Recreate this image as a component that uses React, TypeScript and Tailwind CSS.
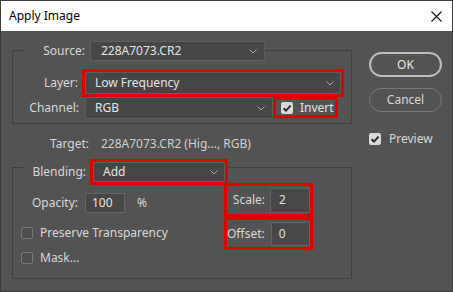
import React from "react";

const FONT = { fontFamily: '"Noto Sans", "Open Sans", sans-serif' };

const Chevron = () => (
  <svg width="8" height="5" viewBox="0 0 8 5" className="shrink-0">
    <path d="M0.5 0.5 L4 4 L7.5 0.5" fill="none" stroke="#a9a9a9" strokeWidth="1" />
  </svg>
);

const Check = ({ checked }: { checked?: boolean }) =>
  checked ? (
    <div className="w-[12px] h-[12px] rounded-[2px] bg-[#d9d9d9] flex items-center justify-center shrink-0">
      <svg width="12" height="12" viewBox="0 0 12 12">
        <path d="M2.6 6.2 L5 8.6 L9.6 3.6" fill="none" stroke="#2b2b2b" strokeWidth="2" />
      </svg>
    </div>
  ) : (
    <div className="w-[12px] h-[12px] rounded-[2px] border border-[#777777] bg-[#4e4e4e] shrink-0" />
  );

const Combo = ({ value, className }: { value: string; className?: string }) => (
  <div
    className={`flex items-center justify-between bg-[#464646] border border-[#5d5d5d] rounded-[2px] pl-[9px] pr-[6px] text-[#e4e4e4] ${className ?? ""}`}
  >
    <span>{value}</span>
    <Chevron />
  </div>
);

const Field = ({ value, className }: { value: string; className?: string }) => (
  <div
    className={`flex items-center bg-[#474747] border border-[#636363] pl-[6px] text-[#e4e4e4] ${className ?? ""}`}
  >
    {value}
  </div>
);

export default function App() {
  return (
    <div
      className="w-[453px] h-[292px] border border-[#3c3c3c] bg-[#535353] flex flex-col text-[12px] leading-none text-[#d8d8d8] overflow-hidden"
      style={FONT}
    >
      {/* title bar */}
      <div className="h-[30px] bg-white flex items-center justify-between pl-[8px] pr-[10px] shrink-0">
        <span className="text-[12px] text-black">Apply Image</span>
        <svg width="11" height="11" viewBox="0 0 11 11">
          <path d="M0.5 0.5 L10.5 10.5 M10.5 0.5 L0.5 10.5" stroke="#111" strokeWidth="1.1" />
        </svg>
      </div>

      <div className="flex flex-1">
        {/* left column */}
        <div className="w-[351px] ml-[11px] flex flex-col">
          {/* source frame */}
          <div className="mt-[19px] w-[340px] h-[74px] border border-[#3f3f3f] flex flex-col">
            <div className="flex items-stretch h-[20px] -mt-[10px]">
              <div className="ml-[12px] w-[65px] bg-[#535353] flex items-center justify-end pr-[5px]">
                Source:
              </div>
              <Combo value="228A7073.CR2" className="w-[175px] h-[20px] pl-[10px] pr-[7px]" />
            </div>
            <div className="flex items-center mt-[8px]">
              <div className="w-[69px] text-right pr-[4px]">Layer:</div>
              <div className="w-[262px] h-[28px] border-[3px] border-[#e00000] flex">
                <Combo value="Low Frequency" className="flex-1 pr-[4px]" />
              </div>
            </div>
            <div className="flex items-start">
              <div className="w-[72px] h-[22px] flex items-center justify-end pr-[6px]">Channel:</div>
              <Combo value="RGB" className="w-[188px] h-[22px] pr-[7px]" />
              <div className="w-[65px] h-[21px] border-[3px] border-[#e00000] flex items-center pl-[5px] gap-[7px] text-[#e4e4e4]">
                <Check checked />
                <span>Invert</span>
              </div>
            </div>
          </div>

          {/* target */}
          <div className="flex items-center h-[20px] mt-[10px]">
            <div className="w-[89px] text-right pr-[12px]">Target:</div>
            <span className="text-[#d0d0d0]">228A7073.CR2 (Hig..., RGB)</span>
          </div>

          {/* blending frame */}
          <div className="mt-[13px] w-[340px] h-[112px] border border-[#3f3f3f] flex flex-col">
            <div className="flex items-stretch h-[26px] -mt-[9px]">
              <div className="ml-[12px] w-[65px] bg-[#535353] flex items-center justify-end pr-[4px]">
                Blending:
              </div>
              <div className="w-[138px] border-[3px] border-[#e00000] flex">
                <Combo value="Add" className="flex-1 pr-[5px]" />
              </div>
            </div>
            <div className="flex -mt-[2px]">
              <div className="w-[211px] flex flex-col pt-[10px]">
                <div className="flex items-center h-[20px]">
                  <div className="w-[72px] text-right pr-[7px]">Opacity:</div>
                  <Field value="100" className="w-[40px] h-[20px]" />
                  <span className="ml-[12px]">%</span>
                </div>
                <div className="flex items-center h-[20px] mt-[10px] pl-[8px] gap-[7px]">
                  <Check />
                  <span>Preserve Transparency</span>
                </div>
                <div className="flex items-center h-[20px] mt-[5px] pl-[8px] gap-[7px]">
                  <Check />
                  <span>Mask...</span>
                </div>
              </div>
              <div className="flex flex-col w-[89px]">
                <div className="h-[34px] border-[3px] border-[#e00000] flex items-center justify-end">
                  <span className="mr-[5px]">Scale:</span>
                  <Field value="2" className="w-[40px] h-[25px] pl-[8px]" />
                </div>
                <div className="h-[33px] border-[3px] border-[#e00000] flex items-center justify-end">
                  <span className="mr-[6px]">Offset:</span>
                  <Field value="0" className="w-[40px] h-[24px] pl-[7px]" />
                </div>
              </div>
            </div>
          </div>
        </div>

        {/* right column */}
        <div className="ml-[6px] flex flex-col">
          <button className="mt-[21px] w-[73px] h-[25px] rounded-full border-2 border-[#bdbdbd] text-[#e6e6e6] text-[12px]">
            OK
          </button>
          <button className="mt-[11px] w-[73px] h-[24px] rounded-full border border-[#787878] text-[#d8d8d8] text-[12px]">
            Cancel
          </button>
          <div className="flex items-center h-[20px] mt-[17px] gap-[8px]">
            <Check checked />
            <span>Preview</span>
          </div>
        </div>
      </div>
    </div>
  );
}
